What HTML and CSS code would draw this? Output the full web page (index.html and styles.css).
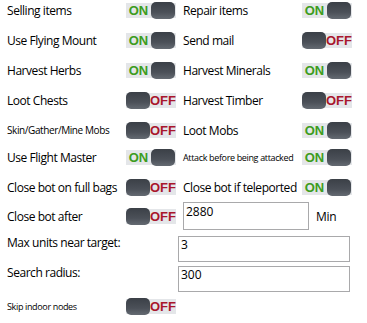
FILE: index.html
```html
<!DOCTYPE html>
<html lang="en">
<head>
    <meta charset="UTF-8">
    <meta name="viewport" content="width=device-width, initial-scale=1.0">
    <title>Bot settings</title>
    <link rel="stylesheet" href="styles.css">
</head>
<body>
    <div class="panel">
        <div class="row">
            <span class="label">Selling items</span>
            <span class="toggle on"><b>ON</b><i class="knob"></i></span>
            <span class="label">Repair items</span>
            <span class="toggle on"><b>ON</b><i class="knob"></i></span>
        </div>
        <div class="row">
            <span class="label">Use Flying Mount</span>
            <span class="toggle on"><b>ON</b><i class="knob"></i></span>
            <span class="label">Send mail</span>
            <span class="toggle off"><i class="knob"></i><b>OFF</b></span>
        </div>
        <div class="row">
            <span class="label">Harvest Herbs</span>
            <span class="toggle on"><b>ON</b><i class="knob"></i></span>
            <span class="label">Harvest Minerals</span>
            <span class="toggle on"><b>ON</b><i class="knob"></i></span>
        </div>
        <div class="row">
            <span class="label">Loot Chests</span>
            <span class="toggle off"><i class="knob"></i><b>OFF</b></span>
            <span class="label">Harvest Timber</span>
            <span class="toggle off"><i class="knob"></i><b>OFF</b></span>
        </div>
        <div class="row">
            <span class="label small">Skin/Gather/Mine Mobs</span>
            <span class="toggle off"><i class="knob"></i><b>OFF</b></span>
            <span class="label">Loot Mobs</span>
            <span class="toggle on"><b>ON</b><i class="knob"></i></span>
        </div>
        <div class="row close">
            <span class="label">Use Flight Master</span>
            <span class="toggle on"><b>ON</b><i class="knob"></i></span>
            <span class="label tiny">Attack before being attacked</span>
            <span class="toggle on"><b>ON</b><i class="knob"></i></span>
        </div>
        <div class="row">
            <span class="label">Close bot on full bags</span>
            <span class="toggle off"><i class="knob"></i><b>OFF</b></span>
            <span class="label">Close bot if teleported</span>
            <span class="toggle on"><b>ON</b><i class="knob"></i></span>
        </div>
        <div class="row row-after">
            <span class="label">Close bot after</span>
            <span class="toggle off"><i class="knob"></i><b>OFF</b></span>
            <input class="field short" type="text" value="2880">
            <span class="unit">Min</span>
        </div>
        <div class="row row-field">
            <span class="label">Max units near target:</span>
            <input class="field wide" type="text" value="3">
        </div>
        <div class="row row-field">
            <span class="label">Search radius:</span>
            <input class="field wide" type="text" value="300">
        </div>
        <div class="row">
            <span class="label tiny">Skip indoor nodes</span>
            <span class="toggle off"><i class="knob"></i><b>OFF</b></span>
        </div>
    </div>
</body>
</html>
```

FILE: styles.css
```css
body {
    margin: 0;
    background: #fff;
    color: #000;
    font-family: "Open Sans", "Liberation Sans", sans-serif;
    font-size: 12px;
}

.panel {
    display: flex;
    flex-direction: column;
    padding-left: 7px;
}

.row {
    display: grid;
    grid-template-columns: 119px 57px 119px 50px;
    align-items: center;
    height: 20px;
    margin-bottom: 10px;
}

.row.close {
    margin-top: -3px;
}

.label {
    white-space: nowrap;
    letter-spacing: -0.45px;
}

.label.small {
    font-size: 10px;
    letter-spacing: -0.4px;
}

.label.tiny {
    font-size: 9px;
    letter-spacing: -0.35px;
}

.toggle {
    display: flex;
    align-items: center;
    width: 50px;
    height: 15px;
    background: #e4e6e9;
}

.toggle b {
    flex: 1;
    text-align: center;
    font-family: "Liberation Sans", sans-serif;
    font-size: 13px;
    font-weight: bold;
    line-height: 15px;
}

.toggle.on b {
    color: #3d9c20;
}

.toggle.off b {
    color: #a9162c;
}

.knob {
    width: 24px;
    height: 17px;
    border-radius: 5px;
    background: linear-gradient(#3b4047, #4b5058 60%, #646a72);
}

.toggle.on .knob {
    margin-right: 1px;
}

.row-after {
    grid-template-columns: 119px 57px 126px 50px;
    height: 28px;
    margin-top: -5px;
    margin-bottom: 6px;
}

.field {
    box-sizing: border-box;
    border: 1px solid #a9a9ab;
    background: #fff;
    font-family: "Open Sans", "Liberation Sans", sans-serif;
    font-size: 12px;
    color: #000;
    padding: 0 2px 0 2px;
    margin: 0;
    outline: none;
}

.field.short {
    width: 126px;
    height: 28px;
    padding-bottom: 10px;
}

.unit {
    padding-left: 7px;
    letter-spacing: -0.3px;
}

.row-field {
    grid-template-columns: 171px 172px;
    align-items: start;
    height: 26px;
    margin-bottom: 4px;
}

.row-field .label {
    line-height: 14px;
}

.field.wide {
    width: 172px;
    height: 26px;
    padding-bottom: 9px;
}
```
